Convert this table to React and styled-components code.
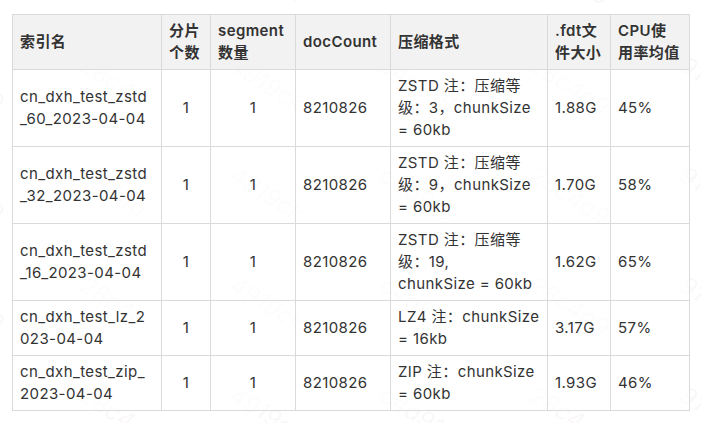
import styled, { createGlobalStyle } from "styled-components";

const GlobalStyle = createGlobalStyle`
  html, body {
    margin: 0;
    padding: 0;
    background: #ffffff;
  }
  body {
    font-family: Inter, "Noto Sans CJK SC", sans-serif;
  }
`

const Page = styled.div`
  position: relative;
  width: 701px;
  height: 423px;
  overflow: hidden;
  padding: 14px 12px;
  box-sizing: border-box;
`

const Watermark = styled.div`
  position: absolute;
  inset: -60px;
  display: grid;
  grid-template-columns: repeat(6, 150px);
  grid-auto-rows: 110px;
  pointer-events: none;
  z-index: 0;
`

const Mark = styled.span`
  font-family: Inter, sans-serif;
  font-size: 24px;
  font-style: italic;
  color: rgba(200, 170, 170, 0.09);
  transform: rotate(32deg);
  transform-origin: left top;
  white-space: nowrap;
`

const Table = styled.table`
  position: relative;
  z-index: 1;
  border-collapse: collapse;
  table-layout: fixed;
  width: 677px;
  font-size: 15px;
  letter-spacing: 0.4px;
  line-height: 22px;
  color: #333333;
`

const HeadCell = styled.th`
  background: #f2f2f2;
  border: 1px solid #dadada;
  padding: 5px 7px;
  text-align: left;
  vertical-align: middle;
  font-weight: 600;
  color: #333333;
`

const Cell = styled.td`
  border: 1px solid #dadada;
  padding: 5px 7px;
  text-align: ${(p) => p.$align || "left"};
  vertical-align: middle;
  background: rgba(255, 255, 255, 0.6);
`

const Line = styled.span`
  display: block;
  white-space: nowrap;
`

const columns = [
  { width: 149, title: ["索引名"] },
  { width: 49, title: ["分片", "个数"] },
  { width: 85, title: ["segment", "数量"] },
  { width: 95, title: ["docCount"] },
  { width: 157, title: ["压缩格式"] },
  { width: 63, title: [".fdt文", "件大小"] },
  { width: 79, title: ["CPU使", "用率均值"] },
]

const rows = [
  {
    name: ["cn_dxh_test_zstd", "_60_2023-04-04"],
    codec: ["ZSTD 注：压缩等", "级：3，chunkSize", "= 60kb"],
    size: "1.88G",
    cpu: "45%",
  },
  {
    name: ["cn_dxh_test_zstd", "_32_2023-04-04"],
    codec: ["ZSTD 注：压缩等", "级：9，chunkSize", "= 60kb"],
    size: "1.70G",
    cpu: "58%",
  },
  {
    name: ["cn_dxh_test_zstd", "_16_2023-04-04"],
    codec: ["ZSTD 注：压缩等", "级：19,", "chunkSize = 60kb"],
    size: "1.62G",
    cpu: "65%",
  },
  {
    name: ["cn_dxh_test_lz_2", "023-04-04"],
    codec: ["LZ4 注：chunkSize", "= 16kb"],
    size: "3.17G",
    cpu: "57%",
  },
  {
    name: ["cn_dxh_test_zip_", "2023-04-04"],
    codec: ["ZIP 注：chunkSize", "= 60kb"],
    size: "1.93G",
    cpu: "46%",
  },
]

const marks = ["919ck0", "28c4a", "4919ck", "c4a919", "28c4a9", "919ck0"]

const Lines = ({ items }) => items.map((t, i) => <Line key={i}>{t}</Line>)

const App = () => {
  return (
    <>
      <GlobalStyle />
      <Page>
        <Watermark>
          {Array.from({ length: 36 }).map((_, i) => (
            <Mark key={i}>{marks[i % marks.length]}</Mark>
          ))}
        </Watermark>
        <Table>
          <colgroup>
            {columns.map((c, i) => (
              <col key={i} style={{ width: c.width }} />
            ))}
          </colgroup>
          <thead>
            <tr>
              {columns.map((c, i) => (
                <HeadCell key={i}>
                  <Lines items={c.title} />
                </HeadCell>
              ))}
            </tr>
          </thead>
          <tbody>
            {rows.map((r, i) => (
              <tr key={i}>
                <Cell>
                  <Lines items={r.name} />
                </Cell>
                <Cell $align="center">1</Cell>
                <Cell $align="center">1</Cell>
                <Cell>8210826</Cell>
                <Cell>
                  <Lines items={r.codec} />
                </Cell>
                <Cell>{r.size}</Cell>
                <Cell>{r.cpu}</Cell>
              </tr>
            ))}
          </tbody>
        </Table>
      </Page>
    </>
  )
}

export default App;
